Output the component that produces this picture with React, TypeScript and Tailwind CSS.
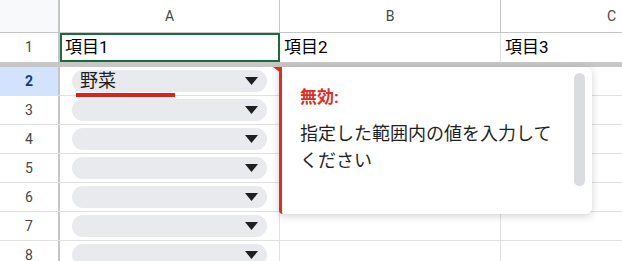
import React from 'react';

const FONT = "font-['Roboto','Noto_Sans_CJK_JP',sans-serif]";

function Triangle() {
  return (
    <svg width="13" height="8" viewBox="0 0 13 8" className="shrink-0">
      <path d="M0 0 L13 0 L6.5 8 Z" fill="#1f1f1f" />
    </svg>
  );
}

function Chip({ label, error }: { label?: string; error?: boolean }) {
  return (
    <div className="relative h-[22px] mx-3 flex items-center rounded-full bg-[#e8eaed] pl-2 pr-[9px]">
      <span className="flex-1 text-[18px] text-[#1f1f1f] leading-none">{label}</span>
      <Triangle />
      {error && <div className="absolute left-1 top-[23px] h-[4px] w-[99px] bg-[#e0201d]" />}
    </div>
  );
}

export default function App() {
  const rows = [3, 4, 5, 6, 7, 8];
  return (
    <div className={`relative w-[622px] h-[261px] overflow-hidden bg-white ${FONT}`}>
      {/* column headers */}
      <div className="flex h-[33px] border-b border-[#c4c7c5]">
        <div className="w-[60px] shrink-0 bg-[#f8f9fa] border-r-[2px] border-[#c4c7c5]" />
        <div className="w-[220px] shrink-0 flex items-center justify-center border-r border-[#c4c7c5] text-[14px] text-[#444746]">A</div>
        <div className="w-[221px] shrink-0 flex items-center justify-center border-r border-[#c4c7c5] text-[14px] text-[#444746]">B</div>
        <div className="w-[221px] shrink-0 flex items-center justify-center text-[14px] text-[#444746]">C</div>
      </div>

      {/* row 1 */}
      <div className="flex h-[29px]">
        <div className="w-[60px] shrink-0 flex items-center justify-center border-r-[2px] border-[#c4c7c5] text-[14px] text-[#444746]">1</div>
        <div className="w-[220px] shrink-0 flex items-center pl-[3px] border-2 border-[#1e6b3a] text-[17px] text-black">項目1</div>
        <div className="w-[221px] shrink-0 flex items-center pl-[4px] border-r border-[#e1e1e1] text-[17px] text-black">項目2</div>
        <div className="w-[221px] shrink-0 flex items-center pl-[4px] text-[17px] text-black">項目3</div>
      </div>

      {/* frozen divider */}
      <div className="h-[5px] bg-[#c7c7c7]" />

      {/* row 2 */}
      <div className="flex h-[29px] border-b border-[#e1e1e1]">
        <div className="w-[60px] shrink-0 flex items-center justify-center bg-[#d3e3fd] border-r-[2px] border-[#c4c7c5] text-[14px] font-bold text-[#0b3c8c]">2</div>
        <div className="w-[220px] shrink-0 flex flex-col justify-center border-r border-[#e1e1e1]">
          <Chip label="野菜" error />
        </div>
        <div className="w-[221px] shrink-0 border-r border-[#e1e1e1]" />
        <div className="w-[221px] shrink-0" />
      </div>

      {rows.map((r) => (
        <div key={r} className="flex h-[29px] border-b border-[#e1e1e1]">
          <div className="w-[60px] shrink-0 flex items-center justify-center border-r-[2px] border-[#c4c7c5] text-[14px] text-[#444746]">{r}</div>
          <div className="w-[220px] shrink-0 flex flex-col justify-center border-r border-[#e1e1e1]">
            <Chip />
          </div>
          <div className="w-[221px] shrink-0 border-r border-[#e1e1e1]" />
          <div className="w-[221px] shrink-0" />
        </div>
      ))}

      {/* validation popup */}
      <div className="absolute left-[279px] top-[67px] w-[313px] h-[147px] bg-white rounded-r-[6px] rounded-bl-[4px] border-l-[3px] border-[#d93025] shadow-[0_2px_8px_rgba(0,0,0,0.18)]">
        <div className="absolute -left-[9px] top-0 w-0 h-0 border-l-[9px] border-l-transparent border-t-[7px] border-t-[#d93025]" />
        <div className="pl-[18px] pt-[18px] pr-[24px]">
          <div className="text-[17px] font-bold text-[#d93025] leading-[24px]">無効:</div>
          <div className="mt-[11px] text-[18px] text-[#1f1f1f] leading-[27px] whitespace-nowrap">
            指定した範囲内の値を入力して
            <br />
            ください
          </div>
        </div>
        <div className="absolute right-[7px] top-[6px] w-[11px] h-[113px] rounded-full bg-[#dadce0]" />
      </div>
    </div>
  );
}
